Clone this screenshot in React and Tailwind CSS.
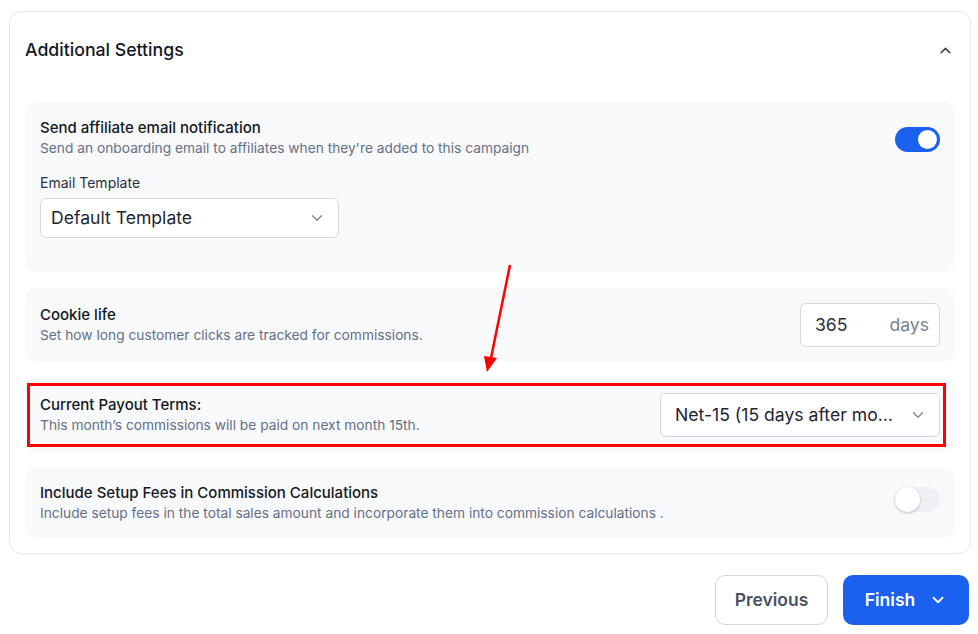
import React, { useState } from "react";

function Chevron({ className = "", up = false, width = "2" }) {
  return (
    <svg
      viewBox="0 0 24 24"
      fill="none"
      stroke="currentColor"
      strokeWidth={width}
      strokeLinecap="round"
      strokeLinejoin="round"
      className={className}
    >
      {up ? <path d="M6 15l6-6 6 6" /> : <path d="M6 9l6 6 6-6" />}
    </svg>
  );
}

function Toggle({ on, onChange }) {
  return (
    <button
      onClick={onChange}
      className={`relative block h-[25px] w-[45px] shrink-0 rounded-full ${
        on ? "bg-[#1a61ef]" : "bg-[#eef0f3]"
      }`}
    >
      {on ? (
        <span className="absolute right-[3px] top-[3px] h-[19px] w-[19px] rounded-full bg-white" />
      ) : (
        <span className="absolute left-0 top-0 h-[25px] w-[25px] rounded-full bg-white shadow-[0_1px_3px_rgba(0,0,0,0.25)]" />
      )}
    </button>
  );
}

function SelectBox({ value, className = "" }) {
  return (
    <div
      className={`flex items-center justify-between rounded-md border border-[#d5d8de] bg-white pr-[12px] ${className}`}
    >
      <span className="truncate text-[17.6px] text-[#1f2430]">{value}</span>
      <Chevron width="1.6" className="ml-3 h-[18px] w-[18px] shrink-0 text-[#7a8190]" />
    </div>
  );
}

function RowText({ title, desc }) {
  return (
    <div>
      <div className="text-[15px] font-medium leading-5 text-[#141824]">{title}</div>
      <div className="text-[13.75px] leading-5 text-[#667085]">{desc}</div>
    </div>
  );
}

export default function App() {
  const [emailOn, setEmailOn] = useState(true);
  const [setupFees, setSetupFees] = useState(false);

  return (
    <div
      className="relative h-[634px] w-[978px] bg-white pl-[9px] pt-[11px]"
      style={{ fontFamily: "Inter, 'Noto Sans', sans-serif" }}
    >
      {/* Settings card */}
      <div className="w-[962px] rounded-xl border border-[#e6e8ec] bg-white px-[15px] pb-[15px]">
        <div className="flex items-center justify-between pb-[38px] pt-[24px]">
          <h2 className="text-[17.7px] font-medium leading-7 text-[#141824]">
            Additional Settings
          </h2>
          <Chevron up width="2.2" className="mr-[1px] h-[17px] w-[17px] text-[#3b4456]" />
        </div>

        <div className="flex flex-col gap-4">
          {/* Email notification */}
          <div className="rounded-[10px] bg-[#f8f9fb] px-[15px] pb-[34px] pt-[16px]">
            <div className="flex items-start justify-between">
              <RowText
                title="Send affiliate email notification"
                desc="Send an onboarding email to affiliates when they're added to this campaign"
              />
              <div className="pt-[9px]">
                <Toggle on={emailOn} onChange={() => setEmailOn(!emailOn)} />
              </div>
            </div>
            <div className="mt-[15px] text-[14px] leading-5 text-[#2a3040]">Email Template</div>
            <SelectBox value="Default Template" className="mt-[5px] h-[40px] w-[299px] pl-[10px]" />
          </div>

          {/* Cookie life */}
          <div className="flex items-center justify-between rounded-[10px] bg-[#f8f9fb] px-[15px] py-[15px]">
            <RowText
              title="Cookie life"
              desc="Set how long customer clicks are tracked for commissions."
            />
            <div className="flex h-[44px] w-[140px] items-center justify-between rounded-md border border-[#d5d8de] bg-white pl-[14px] pr-[10px] text-[17.6px]">
              <span className="text-[#2a3040]">365</span>
              <span className="text-[#7a8190]">days</span>
            </div>
          </div>

          {/* Payout terms */}
          <div className="relative flex items-center justify-between rounded-[10px] bg-[#f8f9fb] px-[15px] py-[15px]">
            <RowText
              title="Current Payout Terms:"
              desc="This month’s commissions will be paid on next month 15th."
            />
            <SelectBox
              value="Net-15 (15 days after month end)"
              className="h-[44px] w-[280px] pl-[14px]"
            />
            <div className="pointer-events-none absolute bottom-[5px] left-[2px] right-[9px] top-[5px] border-[3px] border-[#ff0000]" />
          </div>

          {/* Setup fees */}
          <div className="flex items-center justify-between rounded-[10px] bg-[#f8f9fb] px-[15px] py-[15px]">
            <RowText
              title="Include Setup Fees in Commission Calculations"
              desc="Include setup fees in the total sales amount and incorporate them into commission calculations ."
            />
            <div className="flex pb-[7px]">
              <Toggle on={setupFees} onChange={() => setSetupFees(!setupFees)} />
            </div>
          </div>
        </div>
      </div>

      {/* Footer buttons */}
      <div className="mt-[21px] flex w-[960px] justify-end gap-[15px]">
        <button className="h-[50px] w-[113px] rounded-[10px] border border-[#d5d8de] bg-white text-[17.5px] font-semibold text-[#4b5262]">
          Previous
        </button>
        <button className="flex h-[50px] w-[126px] items-center justify-center gap-[14px] rounded-[10px] bg-[#1a61ef] text-[17.5px] font-semibold text-white">
          Finish
          <Chevron width="2.4" className="h-[18px] w-[18px]" />
        </button>
      </div>

      {/* Annotation arrow */}
      <svg
        className="pointer-events-none absolute left-0 top-0"
        width="978"
        height="634"
      >
        <line x1="510" y1="265" x2="491" y2="358" stroke="#ff0000" strokeWidth="2.5" />
        <polygon points="487,372 484,356 497,358" fill="#ff0000" />
      </svg>
    </div>
  );
}
